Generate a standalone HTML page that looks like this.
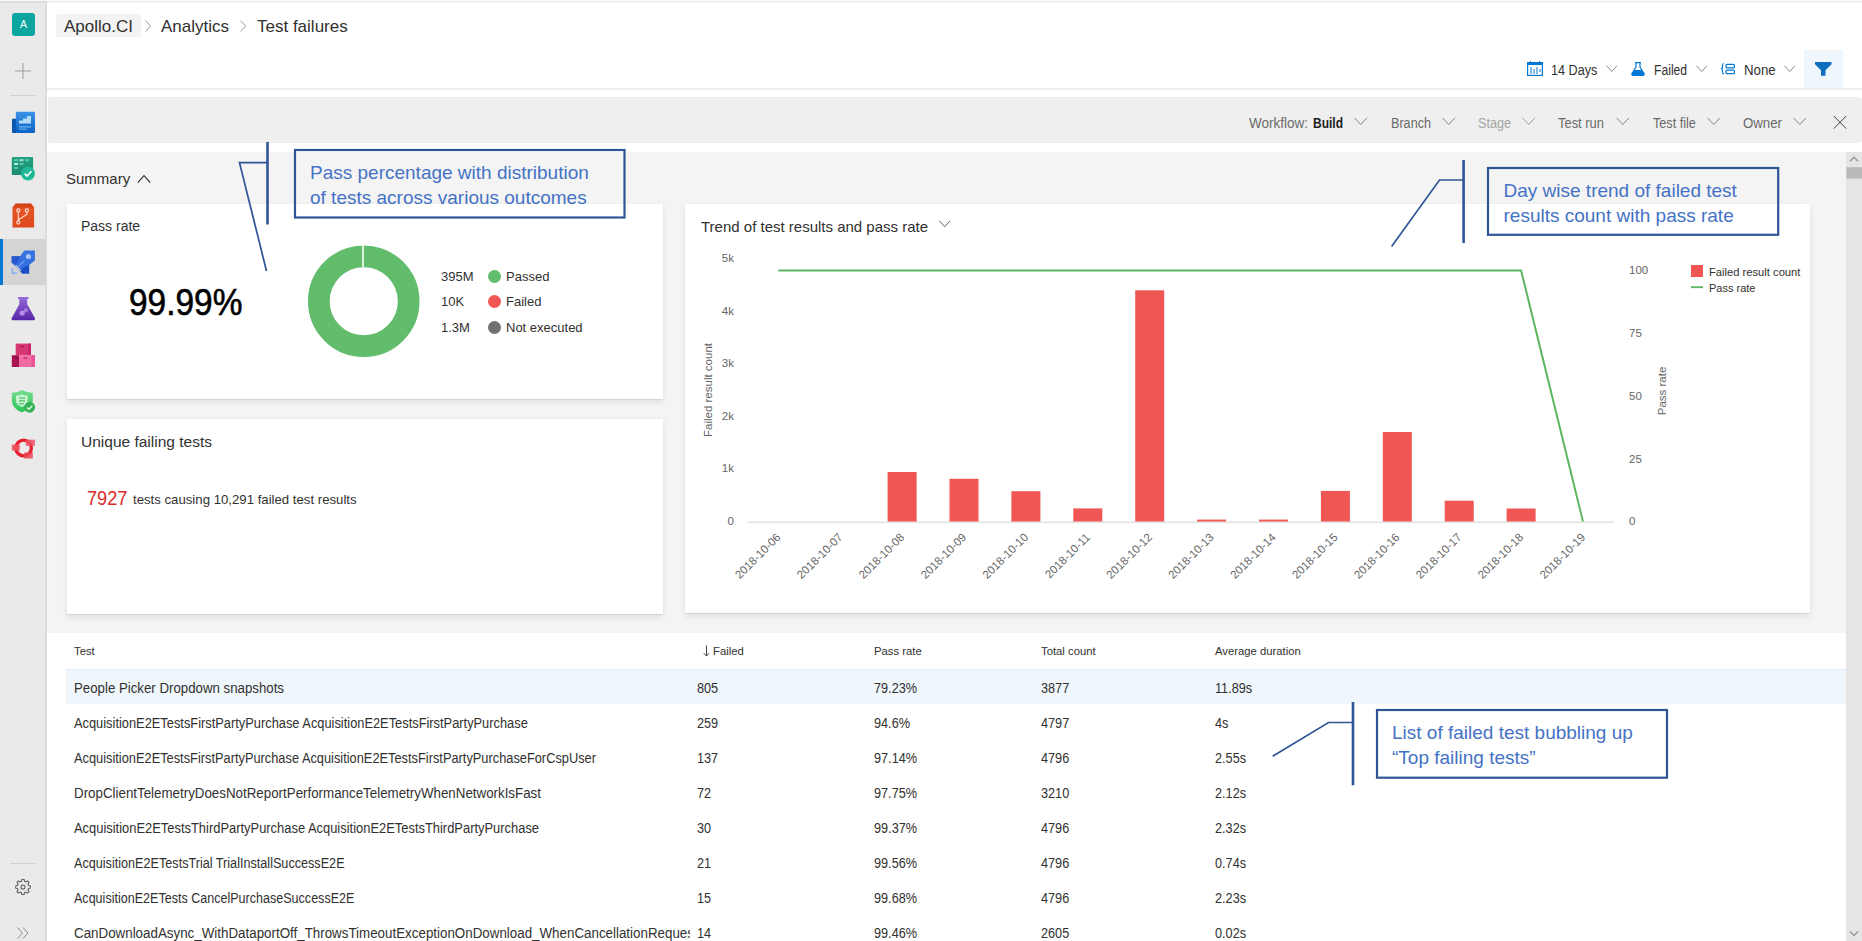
<!DOCTYPE html>
<html><head><meta charset="utf-8">
<style>
*{box-sizing:border-box;margin:0;padding:0}
html,body{width:1862px;height:941px;overflow:hidden;background:#fff;font-family:"Liberation Sans",sans-serif;color:#323130;position:relative}
.a{position:absolute;white-space:nowrap;line-height:1}
svg{position:absolute;overflow:visible}
#topline{left:0;top:0;width:1862px;height:3px;background:linear-gradient(#f9f9f9 0,#f9f9f9 1px,#efefef 1px,#efefef 3px)}
#side{left:0;top:1px;width:47px;height:940px;background:#eaeaea;border-right:2px solid #dcdcdc;border-top:2px solid #dedede}
#hline{left:47px;top:88px;width:1815px;height:2px;background:#ececec}
#fbar{left:48px;top:97px;width:1814px;height:46px;background:#efefef;border-radius:3px}
#sumbg{left:47px;top:152px;width:1799px;height:481px;background:#f4f4f4}
#scroll{left:1846px;top:152px;width:16px;height:789px;background:#e5e5e5}
.card{position:absolute;background:#fff;box-shadow:0 2.5px 6px rgba(0,0,0,.085),0 0.3px 1px rgba(0,0,0,.07);border-radius:1px}
.bc{font-size:17px;color:#323130}
.tb{font-size:14px;color:#323130;transform-origin:0 0}
.fb{font-size:14px;color:#6a6a6a;transform-origin:0 0}
.cl{font-size:19px;color:#4472c4}
.box{position:absolute;border:2px solid #2f5597}
.th{font-size:11.3px;color:#323130}
.td{font-size:13.8px;color:#323130}
</style></head><body>
<div class="a" id="topline"></div>
<div class="a" id="side"></div>
<div class="a" id="hline"></div>
<div class="a" id="fbar"></div>
<div class="a" id="sumbg"></div>
<div class="a" id="scroll"></div>

<!-- SIDEBAR -->
<div class="a" style="left:12px;top:13px;width:23px;height:23px;background:#0ca59f;border-radius:3px;color:#fff;font-size:10.5px;font-weight:400;text-align:center;line-height:23px">A</div>
<svg style="left:15px;top:63px" width="16" height="16"><path d="M8 0V16M0 8H16" stroke="#9b9b9b" stroke-width="1"/></svg>
<div class="a" style="left:10px;top:95px;width:26px;height:1px;background:#d2d2d2"></div>
<div class="a" style="left:10px;top:863px;width:26px;height:1px;background:#d2d2d2"></div>
<div class="a" style="left:0;top:239px;width:46px;height:46px;background:#d4d4d4"></div>
<div class="a" style="left:0;top:239px;width:3px;height:46px;background:#0078d4"></div>

<!-- SIDE ICONS -->
<svg style="left:0;top:0" width="47" height="941" viewBox="0 0 47 941">
<defs>
<linearGradient id="gDash" x1="0" y1="0" x2="0" y2="1"><stop offset="0" stop-color="#3a93e6"/><stop offset="1" stop-color="#0d62c6"/></linearGradient>
<linearGradient id="gBoard" x1="0" y1="0" x2="0" y2="1"><stop offset="0" stop-color="#26a383"/><stop offset="1" stop-color="#168a6c"/></linearGradient>
<linearGradient id="gRepo" x1="0" y1="0" x2="0" y2="1"><stop offset="0" stop-color="#c93a10"/><stop offset="0.25" stop-color="#e45424"/><stop offset="1" stop-color="#e0491b"/></linearGradient>
<linearGradient id="gFlask" x1="0" y1="0" x2="0" y2="1"><stop offset="0" stop-color="#9a6bdc"/><stop offset="1" stop-color="#5626a8"/></linearGradient>
<linearGradient id="gShield" x1="0" y1="0" x2="0" y2="1"><stop offset="0" stop-color="#76dd8f"/><stop offset="1" stop-color="#2cc458"/></linearGradient>
</defs>
<!-- dashboards -->
<path d="M12 119.5Q12 118.8 12.8 118.8H16V133H13Q12 133 12 132Z" fill="#0a55ad"/>
<rect x="15.8" y="111.8" width="19.2" height="21.2" rx="1.2" fill="url(#gDash)"/>
<path d="M19 123.5V120.5H23V118.5H27V116H31V123.5Z" fill="#b5dbfa"/>
<rect x="19" y="126" width="12" height="1.6" fill="#5ca6ea"/>
<rect x="19" y="128.4" width="8" height="1.6" fill="#4f9be4"/>
<!-- boards -->
<rect x="11.8" y="157" width="21.3" height="18" rx="0.8" fill="url(#gBoard)"/>
<g fill="#5cc6a9"><rect x="14" y="159.2" width="4" height="2"/><rect x="19.5" y="159.2" width="4" height="2" fill="#9fe3cf"/><rect x="25" y="159.2" width="4" height="2"/><rect x="14" y="163" width="4" height="2" fill="#b8f0de"/><rect x="19.5" y="163" width="4" height="2"/><rect x="14" y="167" width="4" height="2"/></g>
<circle cx="28" cy="173.6" r="7" fill="#1fb898"/>
<path d="M24.6 173.6L27 176L31.4 171.2" fill="none" stroke="#fff" stroke-width="1.6"/>
<!-- repos -->
<path d="M12.5 207.5L15.5 203.6H31.1L34.1 207.5V227.5H12.5Z" fill="url(#gRepo)"/>
<g fill="none" stroke="#fde3d8" stroke-width="1.1"><circle cx="18.3" cy="210.5" r="1.6"/><circle cx="26.8" cy="210.5" r="1.6"/><circle cx="18.3" cy="222.5" r="1.6"/><path d="M18.3 212.1V220.9M26.8 212.1V214.5L18.8 219.5"/></g>
<!-- pipelines -->
<path d="M24.2 250.4H34.9V260.6L29.1 265V273.6H22.3L11.7 262.7V256.2H20.2Z" fill="#3572df"/>
<path d="M11.7 256.2H20.2L16.5 264.4L11.7 262.7Z" fill="#2858cf"/>
<path d="M29.1 265V273.6H22.3L19 270.2L25.5 266.5Z" fill="#1b4ec6"/>
<circle cx="28.4" cy="256.5" r="2.6" fill="#abc6f6"/>
<path d="M17.5 267.1L24.3 261" stroke="#6f9ef2" stroke-width="1.2"/>
<path d="M15.5 265.5L21 271" stroke="#d4d4d4" stroke-width="1.2"/>
<path d="M12.4 268V273.2H17" fill="none" stroke="#86adf6" stroke-width="1.5"/>
<!-- test plans -->
<path d="M18 297H28.5V299H27.2V304.2L35 318.2Q35.5 320.2 33.5 320.2H13Q11 320.2 11.6 318.2L19.3 304.2V299H18Z" fill="url(#gFlask)"/>
<circle cx="22.2" cy="313" r="2.6" fill="#c4a6f0" opacity="0.8"/>
<circle cx="25.8" cy="310.3" r="2" fill="#c4a6f0" opacity="0.6"/>
<!-- artifacts -->
<rect x="15.7" y="343.6" width="15.3" height="11.6" fill="#d83873"/>
<rect x="28" y="343.6" width="3" height="11.6" fill="#c72766"/>
<rect x="11.8" y="355.2" width="7.2" height="11.8" fill="#a91352"/>
<rect x="19" y="355.2" width="16" height="11.8" fill="#f16ca5"/>
<rect x="31.5" y="355.2" width="3.5" height="11.8" fill="#e85395"/>
<rect x="20.5" y="346" width="3.5" height="1.2" fill="#9c1048"/>
<rect x="15.5" y="357.5" width="3" height="1.2" fill="#6f0b35"/>
<rect x="23.5" y="357.5" width="3.5" height="1.2" fill="#b81e5d"/>
<!-- security -->
<path d="M22.3 390.1Q27 393 32.8 392.8V401Q32.8 408.5 21.7 412.4Q11.8 408.5 11.8 400.5V392.8Q17.5 393 22.3 390.1Z" fill="url(#gShield)"/>
<path d="M21.8 394.3Q24.5 395.8 27.7 395.5V401Q27.7 404.5 22 407Q16 404.5 16 401V395.5Q19 395.8 21.8 394.3Z" fill="#c9f3d2"/>
<g fill="#52c86f"><rect x="19" y="397.4" width="6" height="1.3"/><rect x="19" y="400.2" width="6" height="1.3"/><rect x="19" y="403" width="5" height="1.3"/></g>
<circle cx="29.7" cy="407.3" r="5.4" fill="#34b253"/>
<path d="M27 407.4L29 409.3L32.4 405.6" fill="none" stroke="#e6ffe9" stroke-width="1.4"/>
<!-- red -->
<circle cx="23.6" cy="448" r="7.8" fill="none" stroke="#e5202f" stroke-width="3.3"/>
<rect x="11.8" y="444.5" width="8" height="6.1" fill="#ee4a58" opacity="0.85"/>
<rect x="25.8" y="439.7" width="9" height="6.1" fill="#ef5260" opacity="0.85"/>
<rect x="24.2" y="452.5" width="8.6" height="6" fill="#ec4453" opacity="0.85"/>
<!-- gear -->
<g transform="translate(23,887) scale(0.88)" fill="none" stroke="#605e5c" stroke-width="1.2">
<path d="M-1.3 -7.2H1.3L1.7 -5.1L3.4 -4.3L5.1 -5.6L6.9 -3.8L5.6 -2L6.3 -0.3L8.3 0.3V2.7L6.3 3.1L5.6 4.8L6.9 6.6L5.1 8.4L3.4 7.1L1.7 7.9L1.3 10H-1.3L-1.7 7.9L-3.4 7.1L-5.1 8.4L-6.9 6.6L-5.6 4.8L-6.3 3.1L-8.3 2.7V0.3L-6.3 -0.3L-5.6 -2L-6.9 -3.8L-5.1 -5.6L-3.4 -4.3L-1.7 -5.1Z" transform="translate(0,-1.4)"/>
<circle cx="0" cy="0" r="2.3"/>
</g>
<path d="M17.5 927.5L22.5 933L17.5 938.5M23 927.5L28 933L23 938.5" fill="none" stroke="#8a8886" stroke-width="1"/>
</svg>
<!-- SCROLLBAR -->
<svg style="left:1846px;top:152px" width="16" height="789"><path d="M4 9.3L8 5.3L12 9.3" fill="none" stroke="#999" stroke-width="1.5"/><rect x="0.4" y="15.2" width="15.6" height="11.4" fill="#b9b9b9"/><path d="M4 779.5L8 783.5L12 779.5" fill="none" stroke="#999" stroke-width="1.5"/></svg>
<!-- HEADER -->
<div class="a" style="left:56px;top:14px;width:85px;height:23px;background:#f3f3f3;border-radius:2px"></div>
<div class="a bc" style="left:64px;top:18px">Apollo.CI</div>
<svg style="left:144px;top:20px" width="8" height="12"><path d="M1.5 0.5L6.5 6L1.5 11.5" fill="none" stroke="#a19f9d" stroke-width="1"/></svg>
<div class="a bc" style="left:161px;top:18px">Analytics</div>
<svg style="left:239px;top:20px" width="8" height="12"><path d="M1.5 0.5L6.5 6L1.5 11.5" fill="none" stroke="#a19f9d" stroke-width="1"/></svg>
<div class="a bc" style="left:257px;top:18px">Test failures</div>

<!-- TOOLBAR -->
<svg style="left:1527px;top:61px" width="16" height="15" viewBox="0 0 16 15"><rect x="0.6" y="1.6" width="14.8" height="12.8" fill="none" stroke="#0078d4" stroke-width="1.2"/><rect x="0.6" y="1.6" width="14.8" height="2.4" fill="#0078d4"/><path d="M3.5 0V3M12.5 0V3M4 6V13M7 8V13M10 6V13M13 8V11" stroke="#0078d4" stroke-width="1"/></svg>
<div class="a tb" style="transform:scaleX(0.9015);left:1551px;top:63px">14 Days</div>
<svg style="left:1606px;top:65px" width="12" height="8"><path d="M0.5 0.8L5.75 6.5L11 0.8" fill="none" stroke="#8a8886" stroke-width="1"/></svg>
<svg style="left:1631px;top:62px" width="14" height="14" viewBox="0 0 14 14"><path d="M4 0.6H10M5 0.6V5L1 11.5Q0.3 13.4 2.2 13.4H11.8Q13.7 13.4 13 11.5L9 5V0.6" fill="none" stroke="#0078d4" stroke-width="1.2"/><path d="M3.2 8H10.8L13 11.5Q13.7 13.4 11.8 13.4H2.2Q0.3 13.4 1 11.5Z" fill="#0078d4"/></svg>
<div class="a tb" style="transform:scaleX(0.8678);left:1653.7px;top:63px">Failed</div>
<svg style="left:1696px;top:65px" width="12" height="8"><path d="M0.5 0.8L5.75 6.5L11 0.8" fill="none" stroke="#8a8886" stroke-width="1"/></svg>
<svg style="left:1721px;top:63px" width="14" height="12" viewBox="0 0 14 12"><path d="M3 0.5Q1.5 0.5 1.5 2.5V4.5L0.3 5.5L1.5 6.5V9Q1.5 11 3 11" fill="none" stroke="#0078d4" stroke-width="1.1"/><rect x="5" y="1.3" width="8.4" height="3.6" rx="1" fill="none" stroke="#0078d4" stroke-width="1.2"/><rect x="5" y="7.1" width="8.4" height="3.6" rx="1" fill="none" stroke="#0078d4" stroke-width="1.2"/></svg>
<div class="a tb" style="transform:scaleX(0.9472);left:1743.6px;top:63px">None</div>
<svg style="left:1784px;top:65px" width="12" height="8"><path d="M0.5 0.8L5.75 6.5L11 0.8" fill="none" stroke="#8a8886" stroke-width="1"/></svg>
<div class="a" style="left:1804px;top:50px;width:39px;height:38px;background:#eff6fc"></div>
<svg style="left:1815px;top:62px" width="17" height="14" viewBox="0 0 17 14"><path d="M0 0H16.5V2.2L10.5 8.3V13.8H6V8.3L0 2.2Z" fill="#106ebe"/></svg>

<!-- FILTER BAR -->
<div class="a fb" style="transform:scaleX(0.9640);left:1249px;top:116px">Workflow:</div><div class="a fb" style="transform:scaleX(0.8571);left:1313px;top:116px;color:#201f1e;font-weight:700">Build</div>
<svg style="left:1354px;top:117px" width="14" height="9"><path d="M0.5 0.8L6.75 7.5L13 0.8" fill="none" stroke="#8a8886" stroke-width="1"/></svg>
<div class="a fb" style="transform:scaleX(0.9017);left:1391px;top:116px">Branch</div>
<svg style="left:1442px;top:117px" width="14" height="9"><path d="M0.5 0.8L6.75 7.5L13 0.8" fill="none" stroke="#8a8886" stroke-width="1"/></svg>
<div class="a fb" style="transform:scaleX(0.9018);left:1478px;top:116px;color:#a6a6a6">Stage</div>
<svg style="left:1522px;top:117px" width="14" height="9"><path d="M0.5 0.8L6.75 7.5L13 0.8" fill="none" stroke="#a19f9d" stroke-width="1"/></svg>
<div class="a fb" style="transform:scaleX(0.9235);left:1558px;top:116px">Test run</div>
<svg style="left:1616px;top:117px" width="14" height="9"><path d="M0.5 0.8L6.75 7.5L13 0.8" fill="none" stroke="#8a8886" stroke-width="1"/></svg>
<div class="a fb" style="transform:scaleX(0.9016);left:1653px;top:116px">Test file</div>
<svg style="left:1707px;top:117px" width="14" height="9"><path d="M0.5 0.8L6.75 7.5L13 0.8" fill="none" stroke="#8a8886" stroke-width="1"/></svg>
<div class="a fb" style="transform:scaleX(0.9458);left:1743px;top:116px">Owner</div>
<svg style="left:1793px;top:117px" width="14" height="9"><path d="M0.5 0.8L6.75 7.5L13 0.8" fill="none" stroke="#8a8886" stroke-width="1"/></svg>
<svg style="left:1833px;top:115px" width="14" height="15"><path d="M0.8 1L13.2 13.6M13.2 1L0.8 13.6" stroke="#3a3a3a" stroke-width="0.95"/></svg>

<!-- SUMMARY -->
<div class="a" style="left:66px;top:171px;font-size:15px;color:#323130">Summary</div>
<svg style="left:137px;top:174px" width="14" height="10"><path d="M0.8 8.6L7 1.5L13.2 8.6" fill="none" stroke="#323130" stroke-width="1.15"/></svg>

<div class="card" style="left:66.6px;top:204px;width:596.6px;height:194.5px"></div>
<div class="card" style="left:66.6px;top:419px;width:596.6px;height:195px"></div>
<div class="card" style="left:684.6px;top:204px;width:1125.6px;height:409px"></div>

<!-- CARD 1 -->
<div class="a" style="left:81px;top:219px;font-size:14px;color:#323130">Pass rate</div>
<div class="a" style="left:129.4px;top:285.3px;font-size:36px;color:#000;-webkit-text-stroke:0.6px #000;transform:scaleX(0.929);transform-origin:0 0">99.99%</div>
<svg style="left:300px;top:237px" width="128" height="128" viewBox="0 0 128 128">
  <circle cx="63.75" cy="64.25" r="44.9" fill="none" stroke="#61bc6b" stroke-width="21.7"/>
  <path d="M63 8V30" stroke="#fff" stroke-width="1.6"/>
</svg>
<div class="a" style="left:441px;top:269.5px;font-size:13px">395M</div>
<div class="a" style="left:487.5px;top:269.7px;width:13px;height:13px;border-radius:50%;background:#61bc6b"></div>
<div class="a" style="left:506px;top:269.5px;font-size:13px">Passed</div>
<div class="a" style="left:441px;top:294.5px;font-size:13px">10K</div>
<div class="a" style="left:487.5px;top:294.7px;width:13px;height:13px;border-radius:50%;background:#ef5654"></div>
<div class="a" style="left:506px;top:294.5px;font-size:13px">Failed</div>
<div class="a" style="left:441px;top:320.5px;font-size:13px">1.3M</div>
<div class="a" style="left:487.5px;top:320.7px;width:13px;height:13px;border-radius:50%;background:#717171"></div>
<div class="a" style="left:506px;top:320.5px;font-size:13px">Not executed</div>

<!-- CARD 2 -->
<div class="a" style="left:81px;top:434px;font-size:15.5px;color:#323130">Unique failing tests</div>
<div class="a" style="left:86.8px;top:487.8px;font-size:20px;color:#dc2a2a;transform:scaleX(0.91);transform-origin:0 0">7927</div>
<div class="a" style="left:133px;top:493px;font-size:13.2px;color:#323130">tests causing 10,291 failed test results</div>

<!-- CARD 3 -->
<div class="a" style="left:701px;top:219px;font-size:15px;color:#323130">Trend of test results and pass rate</div>
<svg style="left:939px;top:220px" width="12" height="8"><path d="M0.5 0.8L5.75 6.8L11 0.8" fill="none" stroke="#605e5c" stroke-width="1"/></svg>

<!-- TABLE -->
<div class="a th" style="left:74px;top:646px">Test</div>
<svg style="left:703px;top:645px" width="8" height="12"><path d="M3.5 0.5V11M0.8 8.2L3.5 11L6.2 8.2" fill="none" stroke="#323130" stroke-width="0.9"/></svg><div class="a th" style="left:713px;top:646px">Failed</div>
<div class="a th" style="left:874px;top:646px">Pass rate</div>
<div class="a th" style="left:1041px;top:646px">Total count</div>
<div class="a th" style="left:1215px;top:646px">Average duration</div>
<div class="a" style="left:66px;top:669px;width:1780px;height:35px;background:#eff6fc;border-top:1px solid #e6ecf1"></div>
<div class="a" style="left:74px;top:679.5px;width:616px;height:20px;overflow:hidden"><div class="td" style="position:absolute;left:0;top:2px;white-space:nowrap;line-height:1;transform:scaleX(0.9607);transform-origin:0 0">People Picker Dropdown snapshots</div></div>
<div class="a td" style="left:697px;top:681.5px;transform:scaleX(0.92);transform-origin:0 0">805</div>
<div class="a td" style="left:874px;top:681.5px;transform:scaleX(0.92);transform-origin:0 0">79.23%</div>
<div class="a td" style="left:1041px;top:681.5px;transform:scaleX(0.92);transform-origin:0 0">3877</div>
<div class="a td" style="left:1215px;top:681.5px;transform:scaleX(0.92);transform-origin:0 0">11.89s</div>
<div class="a" style="left:74px;top:714.5px;width:616px;height:20px;overflow:hidden"><div class="td" style="position:absolute;left:0;top:2px;white-space:nowrap;line-height:1;transform:scaleX(0.9305);transform-origin:0 0">AcquisitionE2ETestsFirstPartyPurchase AcquisitionE2ETestsFirstPartyPurchase</div></div>
<div class="a td" style="left:697px;top:716.5px;transform:scaleX(0.92);transform-origin:0 0">259</div>
<div class="a td" style="left:874px;top:716.5px;transform:scaleX(0.92);transform-origin:0 0">94.6%</div>
<div class="a td" style="left:1041px;top:716.5px;transform:scaleX(0.92);transform-origin:0 0">4797</div>
<div class="a td" style="left:1215px;top:716.5px;transform:scaleX(0.92);transform-origin:0 0">4s</div>
<div class="a" style="left:74px;top:749.5px;width:616px;height:20px;overflow:hidden"><div class="td" style="position:absolute;left:0;top:2px;white-space:nowrap;line-height:1;transform:scaleX(0.9287);transform-origin:0 0">AcquisitionE2ETestsFirstPartyPurchase AcquisitionE2ETestsFirstPartyPurchaseForCspUser</div></div>
<div class="a td" style="left:697px;top:751.5px;transform:scaleX(0.92);transform-origin:0 0">137</div>
<div class="a td" style="left:874px;top:751.5px;transform:scaleX(0.92);transform-origin:0 0">97.14%</div>
<div class="a td" style="left:1041px;top:751.5px;transform:scaleX(0.92);transform-origin:0 0">4796</div>
<div class="a td" style="left:1215px;top:751.5px;transform:scaleX(0.92);transform-origin:0 0">2.55s</div>
<div class="a" style="left:74px;top:784.5px;width:616px;height:20px;overflow:hidden"><div class="td" style="position:absolute;left:0;top:2px;white-space:nowrap;line-height:1;transform:scaleX(0.9667);transform-origin:0 0">DropClientTelemetryDoesNotReportPerformanceTelemetryWhenNetworkIsFast</div></div>
<div class="a td" style="left:697px;top:786.5px;transform:scaleX(0.92);transform-origin:0 0">72</div>
<div class="a td" style="left:874px;top:786.5px;transform:scaleX(0.92);transform-origin:0 0">97.75%</div>
<div class="a td" style="left:1041px;top:786.5px;transform:scaleX(0.92);transform-origin:0 0">3210</div>
<div class="a td" style="left:1215px;top:786.5px;transform:scaleX(0.92);transform-origin:0 0">2.12s</div>
<div class="a" style="left:74px;top:819.5px;width:616px;height:20px;overflow:hidden"><div class="td" style="position:absolute;left:0;top:2px;white-space:nowrap;line-height:1;transform:scaleX(0.9358);transform-origin:0 0">AcquisitionE2ETestsThirdPartyPurchase AcquisitionE2ETestsThirdPartyPurchase</div></div>
<div class="a td" style="left:697px;top:821.5px;transform:scaleX(0.92);transform-origin:0 0">30</div>
<div class="a td" style="left:874px;top:821.5px;transform:scaleX(0.92);transform-origin:0 0">99.37%</div>
<div class="a td" style="left:1041px;top:821.5px;transform:scaleX(0.92);transform-origin:0 0">4796</div>
<div class="a td" style="left:1215px;top:821.5px;transform:scaleX(0.92);transform-origin:0 0">2.32s</div>
<div class="a" style="left:74px;top:854.5px;width:616px;height:20px;overflow:hidden"><div class="td" style="position:absolute;left:0;top:2px;white-space:nowrap;line-height:1;transform:scaleX(0.9157);transform-origin:0 0">AcquisitionE2ETestsTrial TrialInstallSuccessE2E</div></div>
<div class="a td" style="left:697px;top:856.5px;transform:scaleX(0.92);transform-origin:0 0">21</div>
<div class="a td" style="left:874px;top:856.5px;transform:scaleX(0.92);transform-origin:0 0">99.56%</div>
<div class="a td" style="left:1041px;top:856.5px;transform:scaleX(0.92);transform-origin:0 0">4796</div>
<div class="a td" style="left:1215px;top:856.5px;transform:scaleX(0.92);transform-origin:0 0">0.74s</div>
<div class="a" style="left:74px;top:889.5px;width:616px;height:20px;overflow:hidden"><div class="td" style="position:absolute;left:0;top:2px;white-space:nowrap;line-height:1;transform:scaleX(0.9095);transform-origin:0 0">AcquisitionE2ETests CancelPurchaseSuccessE2E</div></div>
<div class="a td" style="left:697px;top:891.5px;transform:scaleX(0.92);transform-origin:0 0">15</div>
<div class="a td" style="left:874px;top:891.5px;transform:scaleX(0.92);transform-origin:0 0">99.68%</div>
<div class="a td" style="left:1041px;top:891.5px;transform:scaleX(0.92);transform-origin:0 0">4796</div>
<div class="a td" style="left:1215px;top:891.5px;transform:scaleX(0.92);transform-origin:0 0">2.23s</div>
<div class="a" style="left:74px;top:924.5px;width:616px;height:20px;overflow:hidden"><div class="td" style="position:absolute;left:0;top:2px;white-space:nowrap;line-height:1;transform:scaleX(0.9681);transform-origin:0 0">CanDownloadAsync_WithDataportOff_ThrowsTimeoutExceptionOnDownload_WhenCancellationRequested</div></div>
<div class="a td" style="left:697px;top:926.5px;transform:scaleX(0.92);transform-origin:0 0">14</div>
<div class="a td" style="left:874px;top:926.5px;transform:scaleX(0.92);transform-origin:0 0">99.46%</div>
<div class="a td" style="left:1041px;top:926.5px;transform:scaleX(0.92);transform-origin:0 0">2605</div>
<div class="a td" style="left:1215px;top:926.5px;transform:scaleX(0.92);transform-origin:0 0">0.02s</div>
<!-- CHART -->
<svg style="left:0;top:0" width="1862" height="941" viewBox="0 0 1862 941">
<g font-family="Liberation Sans" font-size="11.5" fill="#666">
<text x="734" y="261.9" text-anchor="end">5k</text>
<text x="734" y="314.5" text-anchor="end">4k</text>
<text x="734" y="367.1" text-anchor="end">3k</text>
<text x="734" y="419.7" text-anchor="end">2k</text>
<text x="734" y="472.3" text-anchor="end">1k</text>
<text x="734" y="524.9" text-anchor="end">0</text>
<text x="1629" y="274.3">100</text>
<text x="1629" y="337.0">75</text>
<text x="1629" y="399.7">50</text>
<text x="1629" y="462.5">25</text>
<text x="1629" y="525.4">0</text>
<text transform="translate(712,390) rotate(-90)" text-anchor="middle">Failed result count</text>
<text transform="translate(1665.5,391) rotate(-90)" text-anchor="middle">Pass rate</text>
<text transform="translate(781.3,538) rotate(-45)" text-anchor="end">2018-10-06</text>
<text transform="translate(843.2,538) rotate(-45)" text-anchor="end">2018-10-07</text>
<text transform="translate(905.1,538) rotate(-45)" text-anchor="end">2018-10-08</text>
<text transform="translate(967.0,538) rotate(-45)" text-anchor="end">2018-10-09</text>
<text transform="translate(1028.9,538) rotate(-45)" text-anchor="end">2018-10-10</text>
<text transform="translate(1090.8,538) rotate(-45)" text-anchor="end">2018-10-11</text>
<text transform="translate(1152.7,538) rotate(-45)" text-anchor="end">2018-10-12</text>
<text transform="translate(1214.6,538) rotate(-45)" text-anchor="end">2018-10-13</text>
<text transform="translate(1276.5,538) rotate(-45)" text-anchor="end">2018-10-14</text>
<text transform="translate(1338.4,538) rotate(-45)" text-anchor="end">2018-10-15</text>
<text transform="translate(1400.3,538) rotate(-45)" text-anchor="end">2018-10-16</text>
<text transform="translate(1462.2,538) rotate(-45)" text-anchor="end">2018-10-17</text>
<text transform="translate(1524.1,538) rotate(-45)" text-anchor="end">2018-10-18</text>
<text transform="translate(1586.0,538) rotate(-45)" text-anchor="end">2018-10-19</text>
<text x="1709" y="275.5" fill="#323130" font-size="11.2">Failed result count</text>
<text x="1709" y="291.5" fill="#323130" font-size="11">Pass rate</text>
</g>
<rect x="747.4" y="521.5" width="866.6" height="1.5" fill="#e1e1e1"/>
<rect x="887.6" y="472" width="29" height="49.5" fill="#ef5654"/>
<rect x="949.5" y="478.8" width="29" height="42.7" fill="#ef5654"/>
<rect x="1011.4" y="491.2" width="29" height="30.3" fill="#ef5654"/>
<rect x="1073.3" y="508.4" width="29" height="13.1" fill="#ef5654"/>
<rect x="1135.2" y="290.3" width="29" height="231.2" fill="#ef5654"/>
<rect x="1197.1" y="519.6" width="29" height="1.9" fill="#ef5654"/>
<rect x="1259.0" y="519.6" width="29" height="1.9" fill="#ef5654"/>
<rect x="1320.9" y="490.9" width="29" height="30.6" fill="#ef5654"/>
<rect x="1382.8" y="432" width="29" height="89.5" fill="#ef5654"/>
<rect x="1444.7" y="500.7" width="29" height="20.8" fill="#ef5654"/>
<rect x="1506.6" y="508.5" width="29" height="13.0" fill="#ef5654"/>
<polyline points="778.3,270.5 1521.1,270.5 1583.0,521.5" fill="none" stroke="#5db761" stroke-width="2"/>
<rect x="1691" y="265" width="12" height="12" fill="#ef5654"/>
<rect x="1691" y="286.3" width="12" height="1.8" fill="#5db761"/>
</svg>
<!-- CALLOUTS -->
<svg style="left:0;top:0" width="1862" height="941" viewBox="0 0 1862 941">
<g stroke="#2f5597" fill="none">
<path d="M267.5 142V224.5" stroke-width="2.6"/>
<path d="M267.5 162.7H239.5L266.5 271" stroke-width="1.7"/>
<rect x="295" y="150" width="329.5" height="67.5" stroke-width="2.2"/>
<path d="M1463.6 160V243" stroke-width="2.6"/>
<path d="M1463.6 180H1439.5L1391.6 246.5" stroke-width="1.7"/>
<rect x="1488" y="168" width="290.2" height="66.8" stroke-width="2.2"/>
<path d="M1353 702V785.3" stroke-width="2.6"/>
<path d="M1353 722.5H1328.5L1272.7 756.2" stroke-width="1.7"/>
<rect x="1377" y="710" width="290" height="67.7" stroke-width="2.2"/>
</g>
</svg>
<div class="a cl" style="left:310px;top:163px">Pass percentage with distribution</div>
<div class="a cl" style="left:310px;top:188px">of tests across various outcomes</div>
<div class="a cl" style="left:1503.5px;top:181px">Day wise trend of failed test</div>
<div class="a cl" style="left:1503.5px;top:205.5px">results count with pass rate</div>
<div class="a cl" style="left:1392px;top:722.5px">List of failed test bubbling up</div>
<div class="a cl" style="left:1392px;top:748px">&#8220;Top failing tests&#8221;</div>
</body></html>
